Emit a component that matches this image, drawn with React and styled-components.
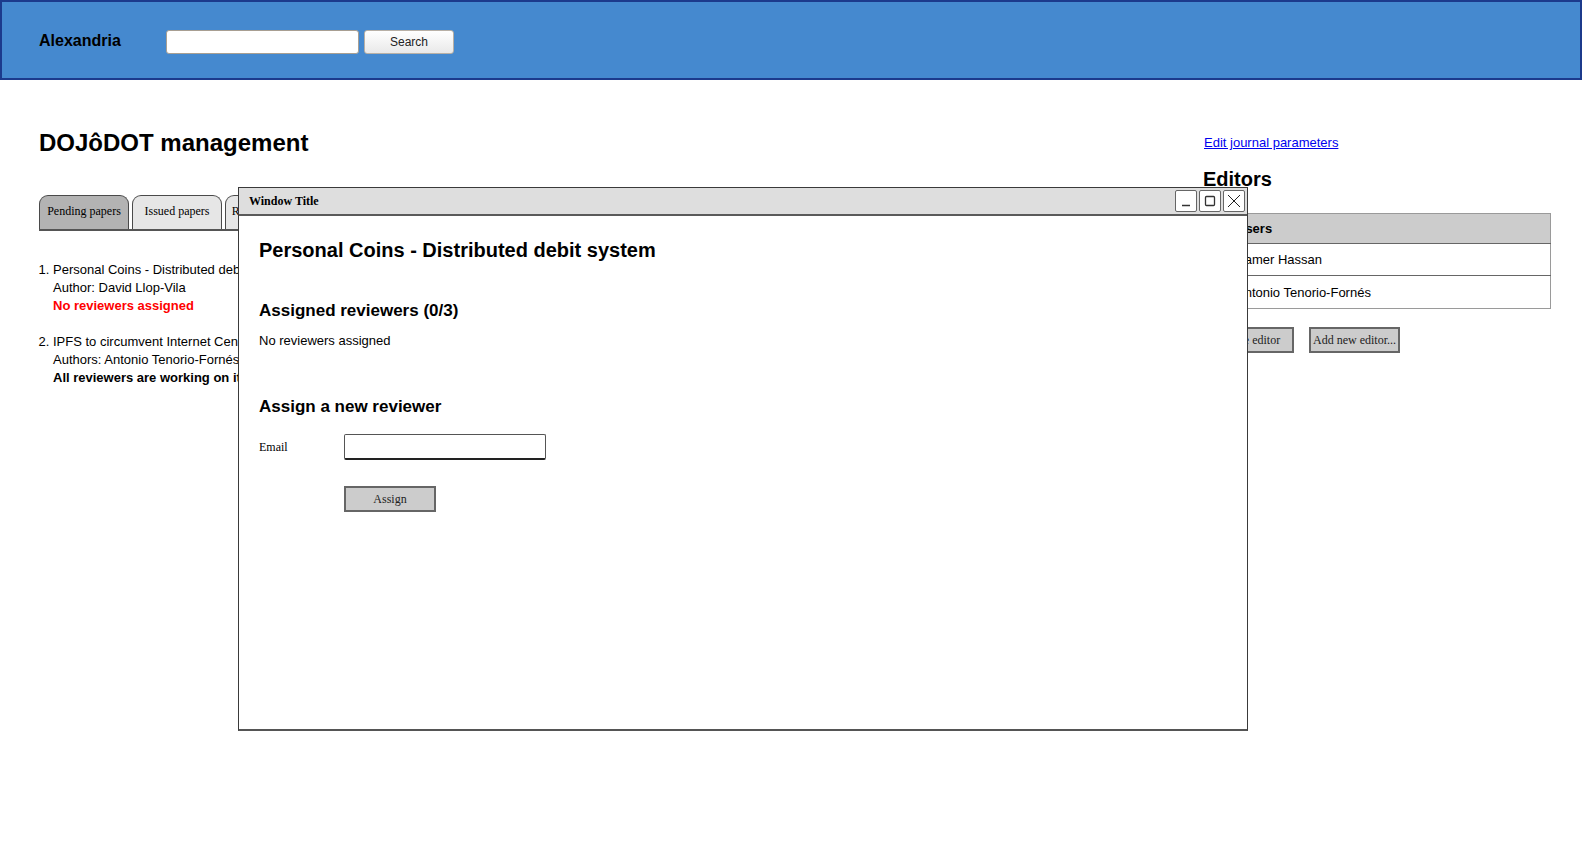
import React from 'react'
import styled, { createGlobalStyle } from 'styled-components'

const GlobalStyle = createGlobalStyle`
  html, body {
    margin: 0;
    padding: 0;
    background: #ffffff;
    font-family: "Liberation Sans", Arial, sans-serif;
    color: #000000;
  }
`

const Page = styled.div`
  position: relative;
  width: 1582px;
  min-height: 856px;
`

const Header = styled.header`
  box-sizing: border-box;
  height: 80px;
  background: #4589cf;
  border: 2px solid #1c3a8c;
  display: flex;
  align-items: center;
  padding: 0 0 0 37px;
`
const Brand = styled.div`
  font-size: 16px;
  font-weight: bold;
  width: 127px;
  margin-top: 1px;
`
const SearchForm = styled.div`
  display: flex;
  gap: 5px;
  margin-top: 3px;
`
const SearchInput = styled.input`
  box-sizing: border-box;
  width: 193px;
  height: 24px;
  border: 1px solid #a89f92;
  border-radius: 3px;
  background: #ffffff;
  padding: 0 4px;
`
const SearchButton = styled.button`
  box-sizing: border-box;
  width: 90px;
  height: 24px;
  border: 1px solid #b8b0a6;
  border-radius: 3px;
  background: linear-gradient(#ffffff, #e9e9e9);
  font-family: "Liberation Sans", Arial, sans-serif;
  font-size: 12px;
  color: #222;
  padding: 1px 0 0 0;
`

const Main = styled.main`
  display: grid;
  grid-template-columns: 1fr 348px;
  padding: 0 31px 0 38px;
`
const LeftColumn = styled.section`
  padding: 49px 0 0 1px;
`
const PageTitle = styled.h1`
  margin: 0;
  font-size: 24px;
  line-height: 28px;
  font-weight: bold;
`
const Tabs = styled.div`
  display: flex;
  gap: 3px;
  margin-top: 38px;
  border-bottom: 2px solid #555;
  width: 1120px;
`
const Tab = styled.div`
  box-sizing: border-box;
  width: 90px;
  height: 34px;
  border: 1px solid #4a4a4a;
  border-bottom: none;
  border-radius: 9px 9px 0 0;
  background: ${p => (p.$active ? '#b3b3b3' : '#e6e6e6')};
  font-family: "Liberation Serif", "Times New Roman", serif;
  font-size: 12px;
  display: flex;
  align-items: center;
  justify-content: center;
  padding-bottom: 2px;
  white-space: nowrap;
  overflow: hidden;
`
const PaperList = styled.ol`
  margin: 30px 0 0 0;
  padding: 0 0 0 14px;
  font-size: 13px;
  line-height: 18px;
`
const Paper = styled.li`
  margin-bottom: 18px;
`
const Status = styled.div`
  font-weight: bold;
  color: ${p => p.$color || '#000'};
`

const RightColumn = styled.aside`
  padding-top: 55px;
`
const Link = styled.a`
  font-size: 13px;
  line-height: 15px;
  color: #0000ee;
  text-decoration: underline;
  display: block;
  margin-left: 1px;
`
const SectionTitle = styled.h2`
  margin: 18px 0 0 0;
  font-size: 20px;
  line-height: 23px;
  font-weight: bold;
`
const Table = styled.table`
  margin-top: 22px;
  width: 100%;
  border-collapse: collapse;
  border: 1px solid #9a9a9a;
  font-size: 13px;
`
const HeadCell = styled.th`
  height: 29px;
  background: #cccccc;
  text-align: left;
  padding: 0 0 0 32px;
  font-weight: bold;
  border-bottom: 1px solid #666;
`
const Cell = styled.td`
  height: 31px;
  padding: 0 0 0 32px;
  border-bottom: 1px solid #666;
  tr:last-child > & {
    height: 32px;
    border-bottom: 1px solid #9a9a9a;
  }
`
const ButtonRow = styled.div`
  display: flex;
  gap: 15px;
  margin-top: 18px;
  padding-left: 1px;
`
const SketchButton = styled.button`
  box-sizing: border-box;
  width: ${p => p.$width || 90}px;
  height: 26px;
  border: 2px solid #666;
  background: #cccccc;
  font-family: "Liberation Serif", "Times New Roman", serif;
  font-size: 12px;
  color: #222;
  padding: 0;
  white-space: nowrap;
`

const Dialog = styled.div`
  position: absolute;
  left: 238px;
  top: 187px;
  box-sizing: border-box;
  width: 1010px;
  height: 544px;
  background: #ffffff;
  border: 1px solid #3a3a3a;
  border-bottom: 2px solid #555;
  display: flex;
  flex-direction: column;
`
const TitleBar = styled.div`
  box-sizing: border-box;
  height: 28px;
  background: #dedede;
  border-bottom: 2px solid #5a5a5a;
  display: flex;
  align-items: center;
  justify-content: space-between;
  padding: 0 2px 0 10px;
`
const TitleText = styled.div`
  font-family: "Liberation Serif", "Times New Roman", serif;
  font-size: 12px;
  font-weight: bold;
`
const WindowControls = styled.div`
  display: flex;
  gap: 2px;
`
const ControlButton = styled.div`
  box-sizing: border-box;
  width: 22px;
  height: 22px;
  border: 1px solid #666;
  border-radius: 2px;
  background: #ffffff;
  display: flex;
  align-items: center;
  justify-content: center;
`
const DialogBody = styled.div`
  padding: 22px 20px 0 20px;
`
const DialogTitle = styled.h2`
  margin: 0;
  font-size: 20px;
  line-height: 24px;
  font-weight: bold;
`
const SubTitle = styled.h3`
  margin: ${p => p.$top}px 0 0 0;
  font-size: 17px;
  line-height: 20px;
  font-weight: bold;
`
const Note = styled.p`
  margin: 12px 0 0 0;
  font-size: 13px;
  line-height: 15px;
`
const FormRow = styled.div`
  display: flex;
  align-items: center;
  margin-top: ${p => p.$top}px;
`
const Label = styled.label`
  width: 85px;
  font-family: "Liberation Serif", "Times New Roman", serif;
  font-size: 12px;
`
const EmailInput = styled.input`
  box-sizing: border-box;
  width: 202px;
  height: 26px;
  border: 1px solid #555;
  border-bottom: 2px solid #222;
  border-radius: 2px;
  background: #fff;
`

const MinimizeIcon = () => (
  <svg width="14" height="14" viewBox="0 0 14 14">
    <line x1="3" y1="11.5" x2="11" y2="11.5" stroke="#333" strokeWidth="1.5" />
  </svg>
)
const MaximizeIcon = () => (
  <svg width="14" height="14" viewBox="0 0 14 14">
    <rect x="2.5" y="2.5" width="9" height="9" rx="1" fill="none" stroke="#333" strokeWidth="1.3" />
  </svg>
)
const CloseIcon = () => (
  <svg width="16" height="16" viewBox="0 0 16 16">
    <path d="M2 2 L14 14 M14 2 L2 14" stroke="#222" strokeWidth="1" />
  </svg>
)

const papers = [
  {
    id: 1,
    title: 'Personal Coins - Distributed debit system',
    authors: 'Author: David Llop-Vila',
    status: 'No reviewers assigned',
    color: '#ff0000',
  },
  {
    id: 2,
    title: 'IPFS to circumvent Internet Censorship',
    authors: 'Authors: Antonio Tenorio-Fornés, Samer Hassan',
    status: 'All reviewers are working on it',
  },
]

const editors = ['Samer Hassan', 'Antonio Tenorio-Fornés']

export default function App() {
  return (
    <Page>
      <GlobalStyle />
      <Header>
        <Brand>Alexandria</Brand>
        <SearchForm>
          <SearchInput type="text" />
          <SearchButton>Search</SearchButton>
        </SearchForm>
      </Header>

      <Main>
        <LeftColumn>
          <PageTitle>DOJôDOT management</PageTitle>
          <Tabs>
            <Tab $active>Pending papers</Tab>
            <Tab>Issued papers</Tab>
            <Tab>Rejected papers</Tab>
          </Tabs>
          <PaperList>
            {papers.map(paper => (
              <Paper key={paper.id}>
                <div>{paper.title}</div>
                <div>{paper.authors}</div>
                <Status $color={paper.color}>{paper.status}</Status>
              </Paper>
            ))}
          </PaperList>
        </LeftColumn>

        <RightColumn>
          <Link href="#">Edit journal parameters</Link>
          <SectionTitle>Editors</SectionTitle>
          <Table>
            <thead>
              <tr><HeadCell>Users</HeadCell></tr>
            </thead>
            <tbody>
              {editors.map(name => (
                <tr key={name}><Cell>{name}</Cell></tr>
              ))}
            </tbody>
          </Table>
          <ButtonRow>
            <SketchButton>Delete editor</SketchButton>
            <SketchButton $width={91}>Add new editor...</SketchButton>
          </ButtonRow>
        </RightColumn>
      </Main>

      <Dialog>
        <TitleBar>
          <TitleText>Window Title</TitleText>
          <WindowControls>
            <ControlButton><MinimizeIcon /></ControlButton>
            <ControlButton><MaximizeIcon /></ControlButton>
            <ControlButton><CloseIcon /></ControlButton>
          </WindowControls>
        </TitleBar>
        <DialogBody>
          <DialogTitle>Personal Coins - Distributed debit system</DialogTitle>
          <SubTitle $top={39}>Assigned reviewers (0/3)</SubTitle>
          <Note>No reviewers assigned</Note>
          <SubTitle $top={49}>Assign a new reviewer</SubTitle>
          <FormRow $top={17}>
            <Label>Email</Label>
            <EmailInput type="text" />
          </FormRow>
          <FormRow $top={26}>
            <Label />
            <SketchButton $width={92}>Assign</SketchButton>
          </FormRow>
        </DialogBody>
      </Dialog>
    </Page>
  )
}
